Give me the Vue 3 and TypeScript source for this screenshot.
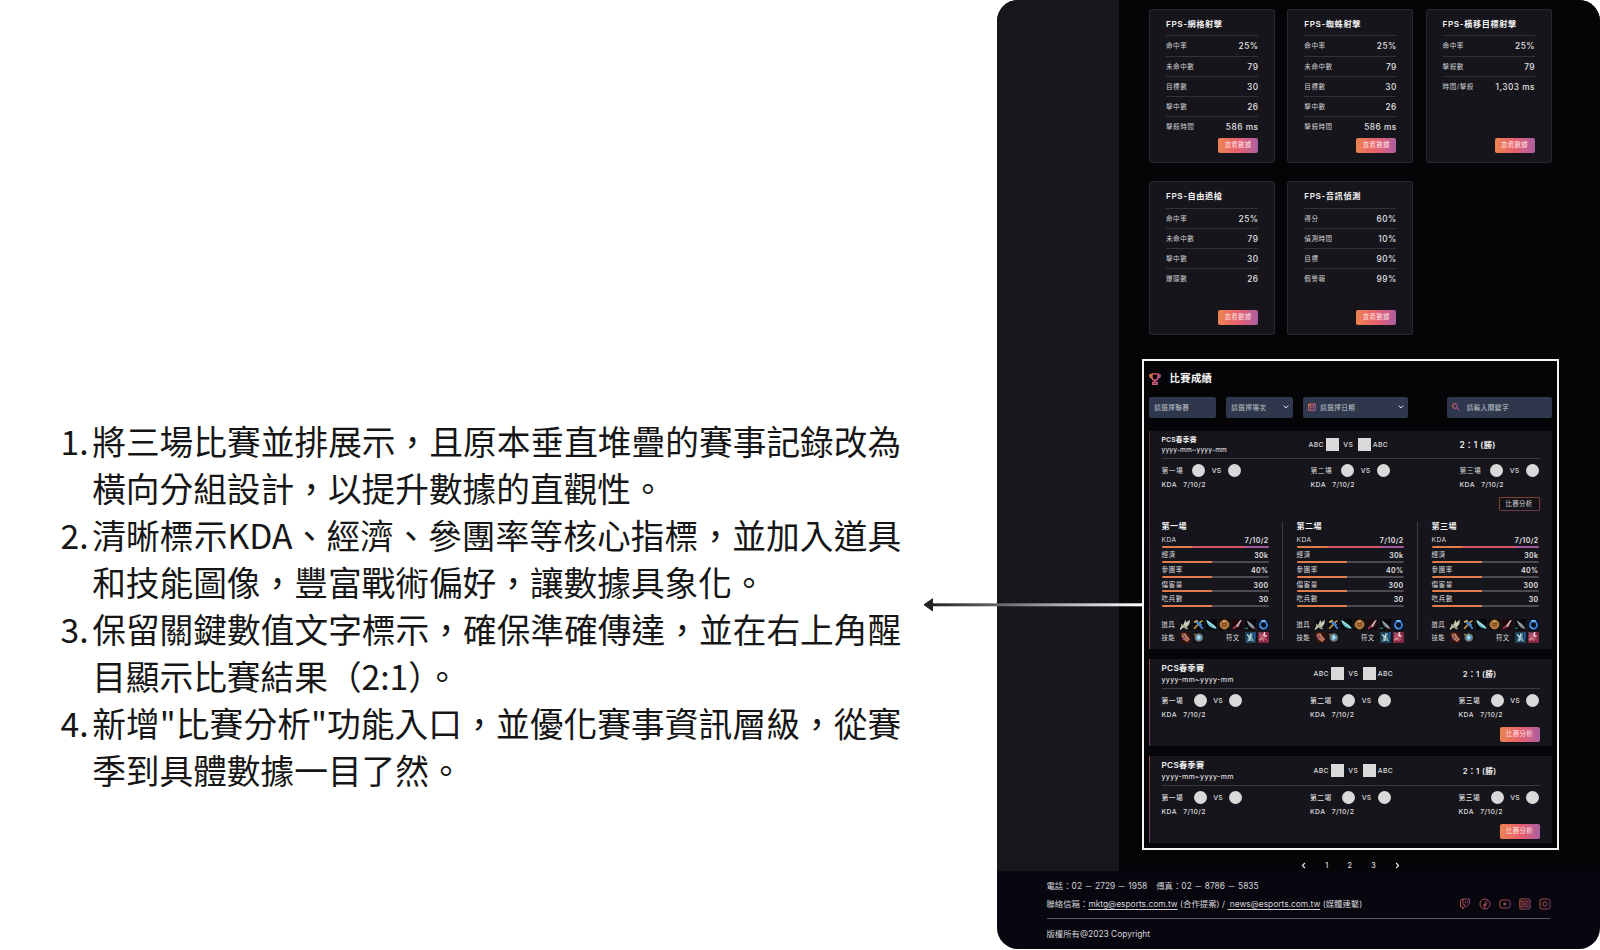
<script setup lang="ts">
interface StatCard {
  title: string
  rows: [string, string][]
}

const cards: StatCard[] = [
  { title: 'FPS-網格射擊', rows: [['命中率', '25%'], ['未命中數', '79'], ['目標數', '30'], ['擊中數', '26'], ['擊殺時間', '586 ms']] },
  { title: 'FPS-蜘蛛射擊', rows: [['命中率', '25%'], ['未命中數', '79'], ['目標數', '30'], ['擊中數', '26'], ['擊殺時間', '586 ms']] },
  { title: 'FPS-橫移目標射擊', rows: [['命中率', '25%'], ['擊殺數', '79'], ['時間/擊殺', '1,303 ms']] },
  { title: 'FPS-自由追槍', rows: [['命中率', '25%'], ['未命中數', '79'], ['擊中數', '30'], ['爆頭數', '26']] },
  { title: 'FPS-音訊偵測', rows: [['得分', '60%'], ['偵測時間', '10%'], ['目標', '90%'], ['假警報', '99%']] },
]

const notes: string[][] = [
  ['將三場比賽並排展示，且原本垂直堆疊的賽事記錄改為', '橫向分組設計，以提升數據的直觀性。'],
  ['清晰標示KDA、經濟、參團率等核心指標，並加入道具', '和技能圖像，豐富戰術偏好，讓數據具象化。'],
  ['保留關鍵數值文字標示，確保準確傳達，並在右上角醒', '目顯示比賽結果（2:1）。'],
  ['新增"比賽分析"功能入口，並優化賽事資訊層級，從賽', '季到具體數據一目了然。'],
]

const rounds: string[] = ['第一場', '第二場', '第三場']
const matches: { open: boolean }[] = [{ open: true }, { open: false }, { open: false }]
const metrics: [string, string][] = [
  ['KDA', '7/10/2'],
  ['經濟', '30k'],
  ['參團率', '40%'],
  ['傷害量', '300'],
  ['吃兵數', '30'],
]
const items: string[] = ['sword', 'hammer', 'blade', 'coin', 'dagger', 'claw', 'ring']
</script>

<template>
  <div class="page">
    <svg class="defs" width="0" height="0" aria-hidden="true">
      <defs>
        <linearGradient id="brand" x1="0" y1="0" x2="1" y2="0.35">
          <stop offset="0" stop-color="#ee8550" />
          <stop offset="0.5" stop-color="#e95d6d" />
          <stop offset="1" stop-color="#b25fa0" />
        </linearGradient>
        <linearGradient id="social" x1="0" y1="0" x2="1" y2="0.2">
          <stop offset="0" stop-color="#b9653f" />
          <stop offset="0.5" stop-color="#b84958" />
          <stop offset="1" stop-color="#8b4a7c" />
        </linearGradient>
        <symbol id="sword" viewBox="0 0 11 11">
          <rect width="11" height="11" fill="#0d0f0e" />
          <path d="M2.4 8 5.4.8 6.4 3.6 9.9.6 9.4 5 6 9.2z" fill="#c9c8b6" /><path d="M1 4.4 8.6 9.6 6.4 10.6 1 7.2z" fill="#9a9b86" /><path d="M0 10.4 3 7" stroke="#d8d3bd" stroke-width="1.8" />
        </symbol>
        <symbol id="hammer" viewBox="0 0 11 11">
          <rect width="11" height="11" fill="#07090d" />
          <path d="M1 9.8 7.5 3" stroke="#b98737" stroke-width="1.9" /><path d="M3 2.4 8.5 6.5" stroke="#3d82c8" stroke-width="2.8" /><path d="M1 3.2 4.6 1.3" stroke="#d9a74b" stroke-width="1.8" /><path d="M6 5.4 9.8 9.8" stroke="#4a7fc9" stroke-width="2" /><path d="M7 3.2 9.6 1.6" stroke="#d9a74b" stroke-width="1.4" />
        </symbol>
        <symbol id="blade" viewBox="0 0 11 11">
          <rect width="11" height="11" fill="#05090b" />
          <path d="M.2.6C4 3.4 7.5 4.5 10.9 9.6 5.6 10 1 7 .2.6z" fill="#61bdc8" /><path d="M1 2C4 5.2 7 5.6 10 9" stroke="#d8f4ee" stroke-width="1" fill="none" />
        </symbol>
        <symbol id="coin" viewBox="0 0 11 11">
          <rect width="11" height="11" fill="#100c0a" />
          <circle cx="5.5" cy="5.5" r="4.4" fill="#a86c32" stroke="#c9924f" /><path d="M3.4 4.2h4.2M3.4 6.4h4.2" stroke="#6b3f1d" stroke-width=".9" /><path d="M4 3 6.5 2.6" stroke="#f0c98a" />
        </symbol>
        <symbol id="dagger" viewBox="0 0 11 11">
          <rect width="11" height="11" fill="#1b090f" />
          <path d="M2.6 8.4 8 1.2 9.8 1 6.3 8z" fill="#b48b91" /><path d="M1 9.8 4.2 7" stroke="#9f3542" stroke-width="1.8" /><path d="M8.8 1.5 4.6 7" stroke="#ead2d0" stroke-width=".8" />
        </symbol>
        <symbol id="claw" viewBox="0 0 11 11">
          <rect width="11" height="11" fill="#06080c" />
          <path d="M1.6.8C4.4 3.6 8 4.5 10.6 9.8 6.2 10 3 7.4 1.6.8z" fill="#6f7b8b" /><path d="M3 3 8.5 8.4" stroke="#c2c4c9" stroke-width=".8" /><path d="M0 9.3h3" stroke="#237c72" stroke-width="1.4" /><path d="M7.4 9.6h3" stroke="#8c463b" />
        </symbol>
        <symbol id="ring" viewBox="0 0 11 11">
          <rect width="11" height="11" fill="#091429" />
          <ellipse cx="5.5" cy="6" rx="3.5" ry="3.7" fill="#07101e" stroke="#397fd4" stroke-width="1.9" /><path d="M3.4 1.8h4.2" stroke="#8ac6f0" stroke-width="1.6" /><path d="M2.5 7Q3 9 5 9.6" stroke="#88c6f4" stroke-width=".7" fill="none" />
        </symbol>
        <symbol id="fist" viewBox="0 0 11 11">
          <rect width="11" height="11" fill="#2b1110" />
          <path d="M1.2 1.6 5.2.8l5 6.4L7.5 10.2 2.6 7.6z" fill="#9a5540" /><path d="M2 3.6 7 9M4.4 2l4.4 6" stroke="#d6a786" stroke-width=".9" /><path d="M2 7 5 5" stroke="#60338c" />
        </symbol>
        <symbol id="orb" viewBox="0 0 11 11">
          <rect width="11" height="11" fill="#0e1219" />
          <circle cx="5.8" cy="5.5" r="3.8" fill="#548fb2" stroke="#7d6849" stroke-width="1.1" /><path d="M5.6 2.6 8 5.6 5 8.4 4 5z" fill="#a5dbea" /><path d="M1 2 3.2 3.4" stroke="#b98a4c" stroke-width="1.2" />
        </symbol>
        <symbol id="frost" viewBox="0 0 11 11">
          <rect width="11" height="11" fill="#1d3d50" />
          <path d="M1 1 5 3.4 8 .7 7.4 5l2 5-4-1.6L2 10l1.2-5z" fill="#6b9dab" /><path d="M6 1 4.5 9M2 3 5 5" stroke="#d6e6e8" stroke-width="1" /><path d="M9.6 0v7" stroke="#245dab" stroke-width="1.5" />
        </symbol>
        <symbol id="ember" viewBox="0 0 11 11">
          <rect width="11" height="11" fill="#812641" />
          <path d="M1 3 5 1l5 3-3 1 3 4-5-2-3 3z" fill="#bc4f65" /><path d="M6.7 0 6 3.6l2.4 1" stroke="#e6cfd2" stroke-width="1.6" fill="none" /><path d="M1 8 4 6l2 3" stroke="#d8b3ba" stroke-width="1" fill="none" /><path d="M1 1.4h2.6" stroke="#5a6b80" stroke-width="1.6" />
        </symbol>
      </defs>
    </svg>

    <ol class="notes">
      <li v-for="(note, n) in notes" :key="n">
        <span class="num">{{ n + 1 }}.</span>
        <div><p v-for="line in note" :key="line">{{ line }}</p></div>
      </li>
    </ol>

    <div class="device">
      <div class="upper">
        <div class="sidebar"></div>
        <main>
          <section class="cards">
            <article v-for="card in cards" :key="card.title" class="card">
              <h3>{{ card.title }}</h3>
              <div v-for="row in card.rows" :key="row[0]" class="stat">
                <span>{{ row[0] }}</span><b>{{ row[1] }}</b>
              </div>
              <button class="cta">查看數據</button>
            </article>
          </section>

          <section class="frame">
            <header class="frame-head">
              <svg width="12" height="12" viewBox="0 0 12 12" fill="none" stroke="url(#brand)" stroke-width="1.4">
                <path d="M3 .9h6v3.3a3 3 0 0 1-6 0zM3 2H.9v.8c0 1.2.8 2 2.1 2M9 2h2.1v.8c0 1.2-.8 2-2.1 2M6 7.2v2M3.8 11.2h4.4V9.4H3.8z" />
              </svg>
              <h2>比賽成績</h2>
            </header>
            <div class="filters">
              <div class="field league">請選擇聯賽</div>
              <div class="field session">
                請選擇場次
                <svg class="chev" width="6" height="4" viewBox="0 0 6 4"><path d="m.7.6 2.3 2.3L5.3.6" fill="none" stroke="#e6e8ee" stroke-width="1" /></svg>
              </div>
              <div class="field date">
                <svg width="8" height="8" viewBox="0 0 8 8" fill="none" stroke="url(#brand)" stroke-width=".9"><path d="M.6 1.3h6.8v6.1H.6zM.6 3h6.8M2.2 0v2M5.8 0v2M2 4.5h1M3.5 4.5h1M5 4.5h1M2 6h1M3.5 6h1M5 6h1" /></svg>
                請選擇日期
                <svg class="chev" width="6" height="4" viewBox="0 0 6 4"><path d="m.7.6 2.3 2.3L5.3.6" fill="none" stroke="#e6e8ee" stroke-width="1" /></svg>
              </div>
              <div class="field search">
                <svg width="8" height="8" viewBox="0 0 8 8" fill="none" stroke="url(#brand)" stroke-width="1"><circle cx="3" cy="3" r="2.4" /><path d="m4.8 4.8 2.7 2.7" /></svg>
                請輸入關鍵字
              </div>
            </div>

            <article v-for="(match, m) in matches" :key="m" class="match" :class="{ open: match.open }">
              <div class="match-head">
                <div class="event"><strong>PCS春季賽</strong><span>yyyy-mm~yyyy-mm</span></div>
                <div class="teams"><span>ABC</span><i></i><span class="vs">VS</span><i></i><span>ABC</span></div>
                <div class="score">2：1 (勝)</div>
              </div>
              <div class="rounds">
                <div v-for="r in rounds" :key="r" class="round">
                  <div class="pair"><span class="label">{{ r }}</span><i></i><span class="vs">VS</span><i></i></div>
                  <div class="kda"><span>KDA</span><span>7/10/2</span></div>
                </div>
              </div>
              <button class="cta">比賽分析</button>
              <div v-if="match.open" class="details">
                <div v-for="r in rounds" :key="r" class="detail">
                  <h4>{{ r }}</h4>
                  <div v-for="(metric, i) in metrics" :key="metric[0]" class="metric">
                    <div><span>{{ metric[0] }}</span><b>{{ metric[1] }}</b></div>
                    <div class="bar" :class="{ full: i === 0 }"></div>
                  </div>
                  <div class="gear first">
                    <span>道具</span>
                    <svg v-for="item in items" :key="item" width="11" height="11"><use :href="'#' + item" /></svg>
                  </div>
                  <div class="gear">
                    <span>技能</span>
                    <svg width="11" height="11"><use href="#fist" /></svg>
                    <svg width="11" height="11"><use href="#orb" /></svg>
                    <span class="rune">符文</span>
                    <svg width="11" height="11"><use href="#frost" /></svg>
                    <svg width="11" height="11"><use href="#ember" /></svg>
                  </div>
                </div>
              </div>
            </article>
          </section>

          <nav class="pager">
            <svg width="5" height="7" viewBox="0 0 5 7"><path d="M3.9 1 1.4 3.5 3.9 6" fill="none" stroke="#eee" stroke-width="1.1" /></svg>
            <span>1</span><span>2</span><span>3</span>
            <svg width="5" height="7" viewBox="0 0 5 7"><path d="M1.1 1l2.5 2.5L1.1 6" fill="none" stroke="#eee" stroke-width="1.1" /></svg>
          </nav>
        </main>
      </div>
      <footer>
        <p class="phone">電話：02 － 2729 － 1958<span class="fax">傳真：02 － 8786 － 5835</span></p>
        <div class="contact">
          <p>聯絡信箱：<u>mktg@esports.com.tw</u> (合作提案) / <u>&nbsp;news@esports.com.tw</u> (媒體連繫)</p>
          <div class="socials">
            <svg width="12" height="12" viewBox="0 0 12 12"><path d="M3.2 1h7.3v5L7.6 8.4H6.2L3.6 11V8.8H1.5V3zM4 1v5.6h1.6v1.6M6.4 3v2.2M8.6 3v2.2" /></svg>
            <svg width="12" height="12" viewBox="0 0 12 12"><circle cx="6" cy="6" r="5" /><path d="M8.5 3.2C6.5 3 6 4 6 5.5V11M4 6.9h4M4 8.8 8 5" /></svg>
            <svg width="12" height="12" viewBox="0 0 12 12"><rect x=".8" y="2" width="10.4" height="8" rx="2" /><path d="M5 4.6v2.8L7.4 6z" /></svg>
            <svg width="12" height="12" viewBox="0 0 12 12"><rect x=".8" y="1" width="10.4" height="10" rx=".8" /><path d="M1 3.2h10M1 8.8h10M6 6C5 4.3 2.5 4.2 2.5 6S5 7.7 6 6s3.5-1.8 3.5 0S7 7.7 6 6z" /></svg>
            <svg width="12" height="12" viewBox="0 0 12 12"><rect x="1" y="1" width="10" height="10" rx="2.2" /><circle cx="6" cy="6" r="2.3" /><path d="M8.7 3.2h.6" /></svg>
          </div>
        </div>
        <p class="copy">版權所有@2023 Copyright</p>
      </footer>
    </div>

    <svg class="arrow" width="220" height="14" viewBox="0 0 220 14">
      <defs>
        <linearGradient id="shaft" gradientUnits="userSpaceOnUse" x1="9" y1="0" x2="220" y2="0">
          <stop offset="0" stop-color="#242426" />
          <stop offset="0.3" stop-color="#626264" />
          <stop offset="0.65" stop-color="#b8b8ba" />
          <stop offset="1" stop-color="#ffffff" />
        </linearGradient>
      </defs>
      <rect x="9" y="5.3" width="211" height="3" fill="url(#shaft)" />
      <path d="M1 6.8 9.5.8v12z" fill="#222224" stroke="#222224" stroke-linejoin="round" />
    </svg>
  </div>
</template>

<style>
body {
  margin: 0;
  background: #fff;
}
</style>

<style scoped>
* {
  box-sizing: border-box;
}
.page {
  position: relative;
  width: 1600px;
  height: 950px;
  overflow: hidden;
  display: grid;
  grid-template-columns: 996.5px 603.5px;
  background: #fff;
  font-family: Inter, "Noto Sans CJK TC", sans-serif;
}
.defs {
  position: absolute;
}
p, h2, h3, h4, ol {
  margin: 0;
  padding: 0;
}
svg {
  display: block;
  flex: none;
}
.notes {
  grid-column: 1;
  padding: 418px 0 0 60.5px;
  list-style: none;
  font: 400 33.68px/46.95px "Noto Sans CJK TC", sans-serif;
  color: #161616;
}
.notes li {
  display: flex;
}
.notes p {
  width: 809px;
  height: 46.95px;
}
.notes p:first-child {
  text-align: justify;
  text-align-last: justify;
}
.num {
  width: 31.7px;
}
.device {
  grid-column: 2;
  height: 948.5px;
  border-radius: 21px;
  overflow: hidden;
  background: #08070f;
  color: #dcdcde;
  display: flex;
  flex-direction: column;
  white-space: nowrap;
}
.upper {
  display: flex;
  height: 871px;
}
.sidebar {
  width: 122.5px;
  background: #17161c;
}
main {
  flex: 1;
  background: #050507;
}
.cards {
  display: grid;
  grid-template-columns: repeat(3, 126px);
  grid-auto-rows: 154px;
  gap: 18.3px 12.3px;
  padding: 9px 0 0 30px;
}
.card {
  display: flex;
  flex-direction: column;
  border: 1px solid #29282e;
  border-radius: 2.5px;
  background: #16151b;
  padding: 5px 16px 9px;
}
.card h3 {
  height: 20.4px;
  font-size: 8.2px;
  line-height: 19px;
  letter-spacing: 0.58px;
  font-weight: 600;
  color: #f2f2f3;
}
.stat {
  display: flex;
  justify-content: space-between;
  height: 20.2px;
  line-height: 20px;
  border-top: 1px solid #323137;
  font-size: 6.6px;
  letter-spacing: 0.5px;
  color: #d0d0d3;
}
.stat b {
  font-size: 8.3px;
  font-weight: 500;
  color: #e2e2e4;
  margin-right: -0.5px;
}
.cta {
  align-self: flex-end;
  width: 40px;
  height: 15px;
  padding: 0;
  border: 0;
  border-radius: 2px;
  background: linear-gradient(90deg, #ec8450, #e8606f 50%, #ad5fa2);
  color: #ffe3e2;
  font: 400 6.5px/15px Inter, "Noto Sans CJK TC", sans-serif;
  letter-spacing: 0.25px;
}
.card .cta {
  margin-top: auto;
}
.frame {
  width: 417px;
  height: 491px;
  margin: 23.7px 0 0 23px;
  border: 2px solid #f4f4f4;
  padding: 0 5px;
}
.frame-head {
  height: 36.5px;
  display: flex;
  align-items: center;
  gap: 8.5px;
  padding-bottom: 1px;
}
.frame-head h2 {
  font-size: 10.4px;
  line-height: 14px;
  font-weight: 700;
  letter-spacing: 0.3px;
  color: #f4f4f4;
}
.filters {
  display: flex;
  height: 20.5px;
  margin-bottom: 13px;
}
.field {
  display: flex;
  align-items: center;
  width: 67.2px;
  padding: 0 0 1px 5.2px;
  border-radius: 2px;
  background: #2e374b;
  font-size: 6.6px;
  letter-spacing: 0.45px;
  color: #c3c7d0;
}
.session {
  margin-left: 9.8px;
}
.date {
  width: 105.3px;
  margin-left: 9.8px;
  gap: 4px;
}
.search {
  width: 105px;
  margin-left: auto;
  gap: 6.5px;
}
.chev {
  margin: 0 4px 0 auto;
}
.match {
  display: flex;
  flex-direction: column;
  height: 87px;
  margin-bottom: 10px;
  padding: 0 12.5px 0 11.5px;
  border-left: 1.5px solid;
  border-image: linear-gradient(#8b4d37, #7d3a4c 50%, #6b3b63) 1;
  background: #16151b;
}
.match.open {
  height: 218px;
  margin-bottom: 10.5px;
  border-image: linear-gradient(#4a2c27, #4a2737 40%, #593455 75%, #8b4d37) 1;
}
.match-head {
  display: grid;
  grid-template-columns: 152px 149.2px auto;
  align-items: center;
  height: 30px;
  border-bottom: 1px solid #3b3a40;
}
.open .match-head {
  grid-template-columns: 147px 151px auto;
  height: 28px;
}
.event {
  display: flex;
  flex-direction: column;
  padding-top: 1px;
  line-height: 12px;
  font-size: 7px;
  font-weight: 500;
  letter-spacing: 0.3px;
}
.event strong {
  font-size: 8.2px;
  font-weight: 600;
  color: #f2f2f3;
}
.open .event {
  line-height: 11px;
  font-size: 6.5px;
  letter-spacing: 0.18px;
}
.open .event strong {
  font-size: 6.8px;
}
.teams {
  display: flex;
  align-items: center;
  font-size: 6.8px;
  font-weight: 500;
  letter-spacing: 0.35px;
}
.teams i {
  width: 13px;
  height: 13px;
  margin: 0 2px;
  background: #d9d9d9;
}
.vs {
  width: 15px;
  text-align: center;
}
.score {
  font-size: 7.7px;
  font-weight: 600;
  letter-spacing: 0.4px;
  color: #eeeeef;
}
.open .score {
  font-size: 8.3px;
}
.rounds {
  display: grid;
  grid-template-columns: 148.5px 148.5px auto;
  padding-top: 4.5px;
  font-size: 6.8px;
  font-weight: 500;
  letter-spacing: 0.4px;
}
.open .rounds {
  grid-template-columns: 149px 149px auto;
  padding-top: 5px;
}
.pair {
  display: flex;
  align-items: center;
  height: 13px;
}
.label {
  width: 32.3px;
}
.open .label {
  width: 30.8px;
  font-weight: 400;
}
.pair .vs {
  width: 22.7px;
}
.pair i {
  width: 13px;
  height: 13px;
  border-radius: 50%;
  background: #d9d9d9;
}
.kda {
  display: flex;
  gap: 6.3px;
  height: 15px;
  line-height: 16.5px;
}
.match .cta {
  margin-top: 5.5px;
  flex: none;
}
.open .cta {
  width: 41px;
  height: 14.5px;
  margin-top: 5px;
  border: 1px solid;
  border-color: #84432e #8d384e #70394f #84432e;
  background: #131217;
  color: #d6d6d9;
  line-height: 12px;
}
.details {
  display: flex;
  gap: 28px;
  margin-top: 11px;
}
.detail {
  position: relative;
  width: 107px;
  flex: none;
}
.detail + .detail::before {
  content: "";
  position: absolute;
  left: -14.5px;
  top: 0;
  width: 1px;
  height: 118px;
  background: #3d3c42;
}
.detail h4 {
  font-size: 8.1px;
  line-height: 9px;
  height: 8px;
  font-weight: 700;
  letter-spacing: 0.4px;
  color: #f2f2f3;
  margin-bottom: 3px;
}
.metric {
  height: 14.7px;
}
.metric > div:first-child {
  display: flex;
  justify-content: space-between;
  height: 12.7px;
  line-height: 15px;
  font-size: 6.7px;
  letter-spacing: 0.4px;
}
.metric b {
  font-size: 7px;
  font-weight: 600;
  color: #e6e6e8;
}
.bar {
  height: 2px;
  border-radius: 1px;
  background: linear-gradient(90deg, #e07c4a 47%, #4b4a50 47%);
}
.bar.full {
  background: linear-gradient(90deg, #e07c4a 28%, #d9566a 29%, #d9566a 77%, #a5579a 79%);
}
.gear {
  display: flex;
  align-items: center;
  height: 13px;
  gap: 2px;
  font-size: 6.4px;
  letter-spacing: 0.3px;
}
.gear.first {
  margin-top: 11.3px;
}
.gear span {
  width: 16.5px;
}
.gear .rune {
  margin-left: auto;
}
.pager {
  display: flex;
  justify-content: space-between;
  align-items: center;
  width: 99px;
  height: 9px;
  margin: 11px 0 0 182px;
  font-size: 7.2px;
  font-weight: 500;
}
footer {
  flex: 1;
  padding: 9px 50px 0;
  font-size: 8.4px;
  line-height: 12px;
  color: #d4d4d8;
}
.fax {
  margin-left: 9px;
}
.contact {
  display: flex;
  justify-content: space-between;
  align-items: center;
  margin-top: 4px;
  padding-bottom: 5.5px;
  height: 23px;
  border-bottom: 1.5px solid #5b5a60;
}
.contact u {
  text-underline-offset: 2px;
}
.socials {
  display: flex;
  gap: 8px;
  margin-right: -0.8px;
}
.socials svg {
  fill: none;
  stroke: url(#social);
  stroke-width: 0.9;
}
.copy {
  margin-top: 9px;
}
.arrow {
  position: absolute;
  left: 923px;
  top: 597.5px;
}
</style>
